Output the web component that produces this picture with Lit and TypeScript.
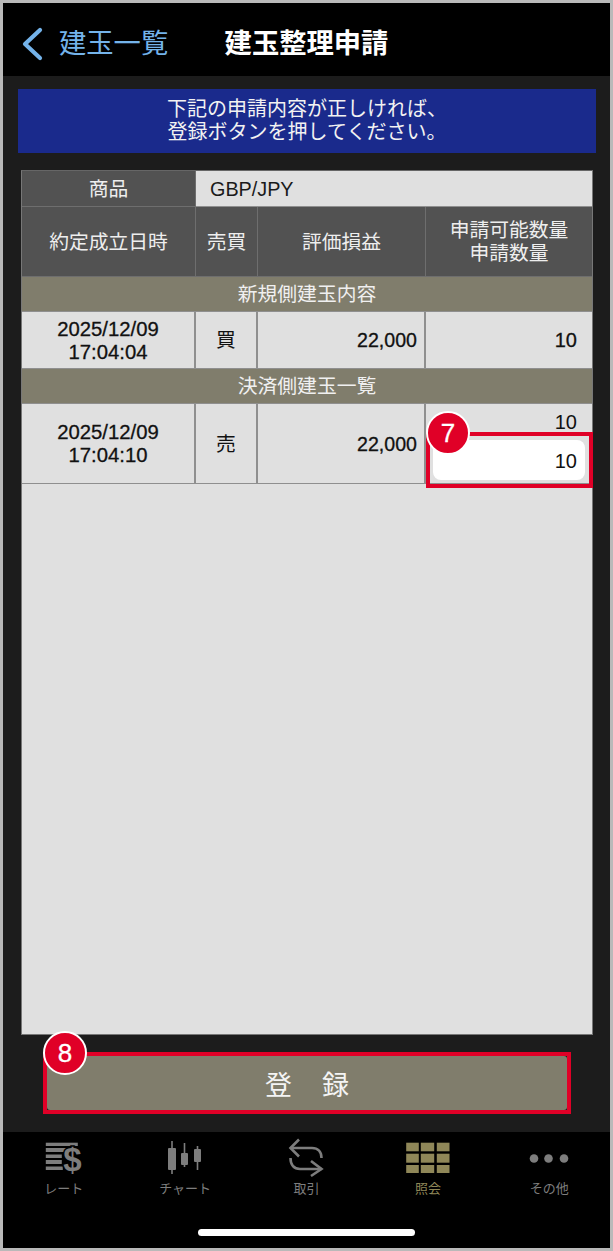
import { LitElement, html, css, svg } from "lit";
import { customElement } from "lit/decorators.js";

const rateIcon = svg`<svg class="icon" width="40" height="37" viewBox="44.5 1141 40 37"><g fill="#7d7d7d"><rect x="46.3" y="1142.7" width="32" height="3.3"/><rect x="46.3" y="1148" width="22" height="4"/><rect x="46.3" y="1154.5" width="16" height="3.5"/><rect x="46.3" y="1160" width="16" height="4"/><rect x="46.3" y="1166.5" width="17" height="3.5"/></g><text x="73" y="1171" text-anchor="middle" font-family="Liberation Sans" font-weight="700" font-size="33" fill="#7d7d7d" stroke="#000" stroke-width="3" paint-order="stroke">$</text></svg>`;
const chartIcon = svg`<svg class="icon" width="36" height="37" viewBox="167 1141 36 37"><g stroke="#7d7d7d" stroke-width="1.6"><path d="M172 1141V1174M184.5 1143V1167M197.5 1146V1170"/></g><g fill="#7d7d7d"><rect x="168" y="1148" width="8" height="22" rx="1"/><rect x="181" y="1153" width="7" height="12" rx="1"/><rect x="194" y="1149" width="7" height="13" rx="1"/></g></svg>`;
const tradeIcon = svg`<svg class="icon" width="36" height="37" viewBox="288 1141 36 37" fill="none" stroke="#7d7d7d" stroke-width="2.6"><path d="M299 1139.5L290.5 1148L299 1156.5"/><path d="M290.5 1148H312C318 1148 321.5 1152 321.5 1158"/><path d="M311 1161L321.5 1169L311 1176"/><path d="M321.5 1169H300C294 1169 290.5 1165 290.5 1158"/></svg>`;
const gridIcon = svg`<svg class="icon" width="44" height="37" viewBox="405.5 1141 44 37" fill="#8f8758"><rect x="405.7" y="1142.7" width="12.6" height="8.6"/><rect x="420.3" y="1142.7" width="13.4" height="8.6"/><rect x="436.3" y="1142.7" width="12.7" height="8.6"/><rect x="405.7" y="1153.7" width="12.6" height="9"/><rect x="420.3" y="1153.7" width="13.4" height="9"/><rect x="436.3" y="1153.7" width="12.7" height="9"/><rect x="405.7" y="1165" width="12.6" height="8"/><rect x="420.3" y="1165" width="13.4" height="8"/><rect x="436.3" y="1165" width="12.7" height="8"/></svg>`;
const dotsIcon = svg`<svg class="icon" width="40" height="37" viewBox="529 1141 40 37" fill="#7d7d7d"><circle cx="534" cy="1158.5" r="4.3"/><circle cx="548.5" cy="1158.5" r="4.3"/><circle cx="564" cy="1158.5" r="4.3"/></svg>`;

@customElement("app-root")
export class AppRoot extends LitElement {
  static styles = css`
    :host {
      display: flex;
      flex-direction: column;
      box-sizing: border-box;
      width: 613px;
      height: 1251px;
      border: 3px solid #b9b9b9;
      background: #1c1c1c;
      font-family: "Liberation Sans", "Noto Sans CJK JP", sans-serif;
      overflow: hidden;
    }
    * { box-sizing: border-box; }
    .nav {
      height: 73px;
      flex: none;
      background: #000;
      display: grid;
      grid-template-columns: 1fr auto 1fr;
      align-items: center;
      padding-top: 9px;
    }
    .back {
      display: flex;
      align-items: center;
      gap: 16px;
      padding-left: 18px;
      color: #74b3ea;
      font-size: 27.3px;
      line-height: 36px;
    }
    .title {
      color: #fff;
      font-size: 27.3px;
      font-weight: 700;
      line-height: 36px;
    }
    .main {
      flex: 1;
      display: flex;
      flex-direction: column;
      padding-top: 13px;
      min-height: 0;
    }
    .banner {
      margin: 0 14px 0 15px;
      height: 64px;
      flex: none;
      background: #1a2a8c;
      color: #f2f2f2;
      font-size: 20px;
      line-height: 23px;
      text-align: center;
      padding-top: 9px;
    }
    .table {
      margin: 17px 17px 0 18px;
      height: 865px;
      flex: none;
      background: #e0e0e0;
      border: 1px solid #777;
      border-top-color: #666;
      display: flex;
      flex-direction: column;
    }
    .row {
      display: grid;
      grid-template-columns: 174px 62px 168px 1fr;
      flex: none;
    }
    .cell {
      display: flex;
      align-items: center;
      justify-content: center;
      text-align: center;
      font-size: 19.8px;
      line-height: 23px;
      padding-top: 1px;
      border-right: 2px solid #8f8f8f;
      border-bottom: 1px solid #8f8f8f;
      color: #111;
      position: relative;
    }
    .cell:last-child { border-right: none; }
    .head {
      background: #525252;
      color: #eee;
      border: 1px solid #6e6e6e;
      border-left: none;
      border-top: none;
    }
    .product { grid-template-columns: 174px 1fr; height: 36px; }
    .headrow { height: 70px; }
    .name {
      justify-content: flex-start;
      padding-left: 14px;
      background: #e0e0e0;
      color: #1a1a1a;
      border: none;
      border-bottom: 1px solid #8f8f8f;
    }
    .section {
      height: 35px;
      flex: none;
      background: #807d6c;
      color: #f0f0f0;
      font-size: 19.8px;
      line-height: 35px;
      text-align: center;
      border-bottom: 1px solid #8f8f8f;
    }
    .r1 { height: 57px; }
    .r2 { height: 80px; }
    .date { -webkit-text-stroke: 0.3px #111; font-size: 20.3px; }
    .num { -webkit-text-stroke: 0.3px #111; font-size: 19.6px; justify-content: flex-end; padding-right: 7px; }
    .qty { padding-right: 15px; font-size: 20px; }
    .qtycell {
      flex-direction: column;
      align-items: flex-end;
      justify-content: flex-start;
      padding: 6px 7px 0 7px;
      font-size: 20px;
    }
    .avail { padding-right: 8px; line-height: 24px; }
    .input {
      width: 152px;
      height: 40px;
      margin-top: 6px;
      background: #fff;
      border-radius: 8px;
      text-align: right;
      padding-right: 8px;
      line-height: 43px;
    }
    .mark {
      position: absolute;
      border: 4px solid #e00027;
      pointer-events: none;
    }
    .qtymark { left: 0; right: -1px; top: 28px; height: 56px; }
    .badge {
      position: absolute;
      width: 44px;
      height: 44px;
      border-radius: 50%;
      background: #e00027;
      border: 2px solid #fff;
      color: #fff;
      font-size: 26px;
      font-weight: 500;
      display: flex;
      align-items: center;
      justify-content: center;
      -webkit-text-stroke: 0.3px #fff;
    }
    .b7 { left: 0px; top: 7px; }
    .btnwrap {
      margin: 17px 39px 0 40px;
      height: 62px;
      flex: none;
      position: relative;
      background: #1c1c1c;
      border: 4px solid #e00027;
    }
    .btn {
      height: 100%;
      border-radius: 3px;
      background: #807d6c;
      color: #f4f4f4;
      font-size: 27px;
      display: flex;
      align-items: center;
      justify-content: center;
      gap: 30px;
    }
    .b8 { left: -4px; top: -25px; }
    .tabs {
      margin-top: 18px;
      flex: 1;
      background: #000;
      position: relative;
      display: grid;
      grid-template-columns: repeat(5, 1fr);
      align-items: start;
    }
    .tab {
      display: flex;
      flex-direction: column;
      align-items: center;
      color: #7d7d7d;
      font-size: 13px;
      line-height: 16px;
      padding-top: 9px;
    }
    .tab.on { color: #8f8758; }
    .ic { height: 37px; display: flex; margin-bottom: 3px; }
    .icon { overflow: visible; display: block; }
    .home {
      position: absolute;
      left: 195px;
      bottom: 12px;
      width: 217px;
      height: 7px;
      border-radius: 4px;
      background: #fff;
    }
  `;

  render() {
    return html`
      <div class="nav">
        <div class="back">
          <svg width="22" height="34" viewBox="0 0 22 34" fill="none" stroke="#74b3ea" stroke-width="4.2" stroke-linecap="round" stroke-linejoin="round"><path d="M19 3L4 17L19 31"/></svg>
          <span>建玉一覧</span>
        </div>
        <div class="title">建玉整理申請</div>
        <div></div>
      </div>
      <div class="main">
        <div class="banner">下記の申請内容が正しければ、<br />登録ボタンを押してください。</div>
        <div class="table">
          <div class="row product">
            <div class="cell head">商品</div>
            <div class="cell name">GBP/JPY</div>
          </div>
          <div class="row headrow">
            <div class="cell head">約定成立日時</div>
            <div class="cell head">売買</div>
            <div class="cell head">評価損益</div>
            <div class="cell head">申請可能数量<br />申請数量</div>
          </div>
          <div class="section">新規側建玉内容</div>
          <div class="row r1">
            <div class="cell date">2025/12/09<br />17:04:04</div>
            <div class="cell">買</div>
            <div class="cell num">22,000</div>
            <div class="cell num qty">10</div>
          </div>
          <div class="section">決済側建玉一覧</div>
          <div class="row r2">
            <div class="cell date">2025/12/09<br />17:04:10</div>
            <div class="cell">売</div>
            <div class="cell num">22,000</div>
            <div class="cell qtycell">
              <div class="avail">10</div>
              <div class="input">10</div>
              <div class="mark qtymark"></div>
              <div class="badge b7">7</div>
            </div>
          </div>
        </div>
        <div class="btnwrap">
          <div class="btn"><span>登</span><span>録</span></div>
          <div class="badge b8">8</div>
        </div>
        <div class="tabs">
          <div class="tab"><div class="ic">${rateIcon}</div>レート</div>
          <div class="tab"><div class="ic">${chartIcon}</div>チャート</div>
          <div class="tab"><div class="ic">${tradeIcon}</div>取引</div>
          <div class="tab on"><div class="ic">${gridIcon}</div>照会</div>
          <div class="tab"><div class="ic">${dotsIcon}</div>その他</div>
          <div class="home"></div>
        </div>
      </div>
    `;
  }
}
